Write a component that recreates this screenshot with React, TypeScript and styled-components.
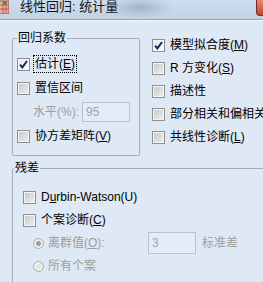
import React from "react";
import styled, { createGlobalStyle } from "styled-components";

const Global = createGlobalStyle`
  html, body { margin: 0; padding: 0; }
  body {
    width: 263px; height: 282px; overflow: hidden;
    background: #dfe9f5;
    font-family: "Liberation Sans", "Noto Sans CJK SC", sans-serif;
    font-size: 12px; color: #000;
  }
`;

const Window = styled.div`
  width: 263px; height: 282px; overflow: hidden;
  display: flex; flex-direction: column;
  background: #dfe9f5;
`;

const TitleBar = styled.div`
  height: 19px; flex: none; position: relative;
  display: flex; align-items: flex-start; gap: 11px;
  background: linear-gradient(to bottom, #cfdeee, #c0d2e6);
  border-bottom: 1px solid #8ea3ba;
  box-shadow: 0 1px 0 #f2f7fc;
  &::after {
    content: ""; position: absolute; left: 105px; top: -4px; width: 70px; height: 22px;
    background: radial-gradient(ellipse at center, rgba(120,135,155,0.45), rgba(120,135,155,0) 70%);
  }
`;

const TitleText = styled.span`
  font-size: 13px; line-height: 15px; color: #111; white-space: nowrap;
  margin-top: -1px;
`;

const CloseSliver = styled.span`
  margin-left: auto; width: 6px; height: 15px;
  border: 1px solid #7a2a1e; border-right: none; border-top: none;
  border-radius: 0 0 0 4px;
  background: linear-gradient(to bottom, #e08a74, #c2452c);
`;

const Body = styled.div`
  flex: 1; display: flex; flex-direction: column; gap: 5px;
  padding: 11px 0 0 12px;
`;

const Top = styled.div`
  display: flex; gap: 12px; align-items: flex-start;
`;

const Group = styled.fieldset<{ $w: number; $h: number }>`
  margin: 0; padding: 0; box-sizing: border-box;
  width: ${p => p.$w}px; height: ${p => p.$h}px;
  border: 1px solid #a2adba; border-radius: 2px;
  min-width: 0; flex: none;
`;

const Legend = styled.legend<{ $ml: number }>`
  padding: 0 1px; margin-left: ${p => p.$ml}px;
  font-size: 12px; line-height: 14px;
`;

const Column = styled.div<{ $pt: number; $pl: number; $gap: number }>`
  display: flex; flex-direction: column;
  padding: ${p => p.$pt}px 0 0 ${p => p.$pl}px;
  gap: ${p => p.$gap}px;
`;

const Row = styled.div<{ $indent?: number; $gap?: number }>`
  display: flex; align-items: center; height: 20px;
  padding-left: ${p => p.$indent ?? 0}px;
  gap: ${p => p.$gap ?? 5}px;
  white-space: nowrap;
`;

const Label = styled.span<{ $disabled?: boolean; $focus?: boolean; $w?: number }>`
  color: ${p => (p.$disabled ? "#9d9d9d" : "#000")};
  line-height: 14px;
  ${p => (p.$w ? `width: ${p.$w}px; flex: none;` : "")}
  ${p => (p.$focus ? "outline: 1px dotted #000; outline-offset: 1px;" : "")}
`;

const Unit = styled(Label)`margin-left: 2px;`;

const U = styled.span`text-decoration: underline; text-underline-offset: 1px;`;

const Box = styled.span<{ $checked?: boolean }>`
  width: 13px; height: 13px; box-sizing: border-box; flex: none;
  border: 1px solid #8e8f8f;
  box-shadow: inset 0 0 0 1px #f6f6f6;
  background: ${p =>
    p.$checked
      ? "linear-gradient(135deg, #e4e6ea, #ffffff)"
      : "linear-gradient(135deg, #c4c7cc, #eeeff1)"};
  display: flex; align-items: center; justify-content: center;
`;

const Radio = styled.span<{ $dot?: boolean }>`
  width: 11px; height: 11px; box-sizing: border-box; flex: none;
  border-radius: 50%; border: 1px solid #adb1b6;
  background: ${p =>
    p.$dot
      ? "radial-gradient(circle, #9c9fa3 0 2.2px, #f3f3f3 2.8px)"
      : "radial-gradient(circle, #e2e3e5 0 2.2px, #f3f3f3 2.8px)"};
  box-shadow: inset 0 0 0 1px #e6e6e6;
`;

const Field = styled.span<{ $w: number; $h: number }>`
  width: ${p => p.$w}px; height: ${p => p.$h}px; box-sizing: border-box; flex: none;
  border: 1px solid #b8c3ce; background: #e3ecf7;
  color: #a3a3a3; padding-left: 3px;
  display: flex; align-items: center; font-size: 12px;
`;

const Check = () => (
  <svg width="9" height="9" viewBox="0 0 9 9">
    <path d="M1 4.6 L3.4 7.4 L8 1" fill="none" stroke="#1f2366" strokeWidth="2" />
  </svg>
);

const AppIcon = () => (
  <svg width="9" height="14" viewBox="0 0 9 14" style={{ flex: "none" }}>
    <rect x="-1" y="1" width="10" height="13" fill="#e9b3a8" stroke="#b5433a" />
    <path d="M-1 5 H9 M-1 9 H9 M3 1 V14 M6 1 V14" stroke="#c0564c" strokeWidth="1" />
    <path d="M3 3 H7 M5 1 V5" stroke="#2c9b3a" strokeWidth="1.6" />
  </svg>
);

const CB = ({ checked, children, focus }: { checked?: boolean; children: React.ReactNode; focus?: boolean }) => (
  <Row>
    <Box $checked={checked}>{checked && <Check />}</Box>
    <Label $focus={focus}>{children}</Label>
  </Row>
);

export default function App() {
  return (
    <>
      <Global />
      <Window>
        <TitleBar>
          <AppIcon />
          <TitleText>线性回归: 统计量</TitleText>
          <CloseSliver />
        </TitleBar>
        <Body>
          <Top>
            <Group $w={128} $h={125}>
              <Legend $ml={4}>回归系数</Legend>
              <Column $pt={9} $pl={4} $gap={4}>
                <CB checked focus>估计(<U>E</U>)</CB>
                <CB>置信区间</CB>
                <Row $indent={16} $gap={3}>
                  <Label $disabled>水平(%):</Label>
                  <Field $w={48} $h={20}>95</Field>
                </Row>
                <CB>协方差矩阵(<U>V</U>)</CB>
              </Column>
            </Group>
            <Column $pt={4} $pl={0} $gap={3}>
              <CB checked>模型拟合度(<U>M</U>)</CB>
              <CB>R 方变化(<U>S</U>)</CB>
              <CB>描述性</CB>
              <CB>部分相关和偏相关性</CB>
              <CB>共线性诊断(<U>L</U>)</CB>
            </Column>
          </Top>
          <Group $w={300} $h={140}>
            <Legend $ml={1}>残差</Legend>
            <Column $pt={12} $pl={10} $gap={3}>
              <CB>D<U>u</U>rbin-Watson(U)</CB>
              <CB>个案诊断(<U>C</U>)</CB>
              <Row $indent={10} $gap={4}>
                <Radio $dot />
                <Label $disabled $w={96}>离群值(<U>O</U>):</Label>
                <Field $w={48} $h={22}>3</Field>
                <Unit $disabled>标准差</Unit>
              </Row>
              <Row $indent={10} $gap={4}>
                <Radio />
                <Label $disabled>所有个案</Label>
              </Row>
            </Column>
          </Group>
        </Body>
      </Window>
    </>
  );
}
